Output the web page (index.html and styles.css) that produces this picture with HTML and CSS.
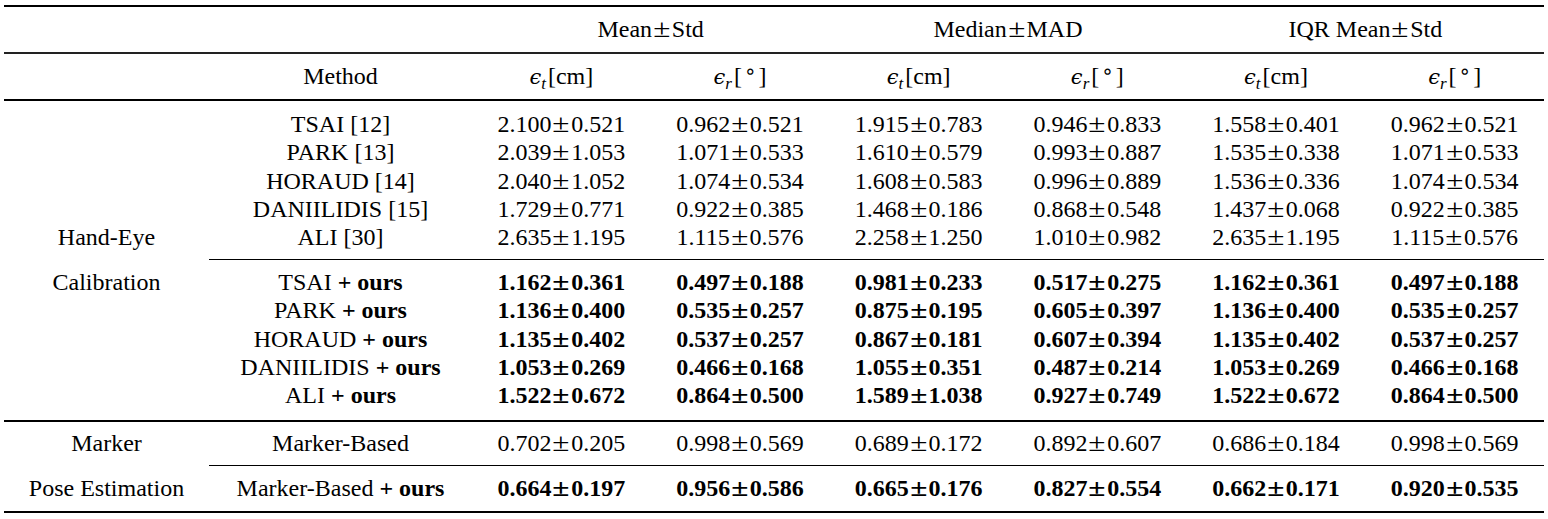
FILE: index.html
```html
<!DOCTYPE html>
<html>
<head>
<meta charset="utf-8">
<link rel="stylesheet" href="styles.css">
</head>
<body>
<div class="tbl">
  <div class="row groups">
    <div></div><div></div>
    <div class="span2">Mean<span class="pm">±</span>Std</div>
    <div class="span2">Median<span class="pm">±</span>MAD</div>
    <div class="span2">IQR Mean<span class="pm">±</span>Std</div>
  </div>
  <div class="row cols">
    <div></div>
    <div>Method</div>
    <div><span class="eps">ϵ</span><sub class="sb">t</sub>[cm]</div>
    <div><span class="eps">ϵ</span><sub class="sb">r</sub>[<span class="deg">∘</span>]</div>
    <div><span class="eps">ϵ</span><sub class="sb">t</sub>[cm]</div>
    <div><span class="eps">ϵ</span><sub class="sb">r</sub>[<span class="deg">∘</span>]</div>
    <div><span class="eps">ϵ</span><sub class="sb">t</sub>[cm]</div>
    <div><span class="eps">ϵ</span><sub class="sb">r</sub>[<span class="deg">∘</span>]</div>
  </div>
  <div class="block first">
    <div class="row">
      <div></div><div>TSAI [12]</div>
      <div>2.100<span class="pm">±</span>0.521</div><div>0.962<span class="pm">±</span>0.521</div><div>1.915<span class="pm">±</span>0.783</div><div>0.946<span class="pm">±</span>0.833</div><div>1.558<span class="pm">±</span>0.401</div><div>0.962<span class="pm">±</span>0.521</div>
    </div>
    <div class="row">
      <div></div><div>PARK [13]</div>
      <div>2.039<span class="pm">±</span>1.053</div><div>1.071<span class="pm">±</span>0.533</div><div>1.610<span class="pm">±</span>0.579</div><div>0.993<span class="pm">±</span>0.887</div><div>1.535<span class="pm">±</span>0.338</div><div>1.071<span class="pm">±</span>0.533</div>
    </div>
    <div class="row">
      <div></div><div>HORAUD [14]</div>
      <div>2.040<span class="pm">±</span>1.052</div><div>1.074<span class="pm">±</span>0.534</div><div>1.608<span class="pm">±</span>0.583</div><div>0.996<span class="pm">±</span>0.889</div><div>1.536<span class="pm">±</span>0.336</div><div>1.074<span class="pm">±</span>0.534</div>
    </div>
    <div class="row">
      <div></div><div>DANIILIDIS [15]</div>
      <div>1.729<span class="pm">±</span>0.771</div><div>0.922<span class="pm">±</span>0.385</div><div>1.468<span class="pm">±</span>0.186</div><div>0.868<span class="pm">±</span>0.548</div><div>1.437<span class="pm">±</span>0.068</div><div>0.922<span class="pm">±</span>0.385</div>
    </div>
    <div class="row">
      <div>Hand-Eye</div><div>ALI [30]</div>
      <div>2.635<span class="pm">±</span>1.195</div><div>1.115<span class="pm">±</span>0.576</div><div>2.258<span class="pm">±</span>1.250</div><div>1.010<span class="pm">±</span>0.982</div><div>2.635<span class="pm">±</span>1.195</div><div>1.115<span class="pm">±</span>0.576</div>
    </div>
  </div>
  <div class="cmid"></div>
  <div class="block second">
    <div class="row bold">
      <div class="cat">Calibration</div><div class="m">TSAI <b>+ ours</b></div>
      <div>1.162<span class="pm">±</span>0.361</div><div>0.497<span class="pm">±</span>0.188</div><div>0.981<span class="pm">±</span>0.233</div><div>0.517<span class="pm">±</span>0.275</div><div>1.162<span class="pm">±</span>0.361</div><div>0.497<span class="pm">±</span>0.188</div>
    </div>
    <div class="row bold">
      <div></div><div class="m">PARK <b>+ ours</b></div>
      <div>1.136<span class="pm">±</span>0.400</div><div>0.535<span class="pm">±</span>0.257</div><div>0.875<span class="pm">±</span>0.195</div><div>0.605<span class="pm">±</span>0.397</div><div>1.136<span class="pm">±</span>0.400</div><div>0.535<span class="pm">±</span>0.257</div>
    </div>
    <div class="row bold">
      <div></div><div class="m">HORAUD <b>+ ours</b></div>
      <div>1.135<span class="pm">±</span>0.402</div><div>0.537<span class="pm">±</span>0.257</div><div>0.867<span class="pm">±</span>0.181</div><div>0.607<span class="pm">±</span>0.394</div><div>1.135<span class="pm">±</span>0.402</div><div>0.537<span class="pm">±</span>0.257</div>
    </div>
    <div class="row bold">
      <div></div><div class="m">DANIILIDIS <b>+ ours</b></div>
      <div>1.053<span class="pm">±</span>0.269</div><div>0.466<span class="pm">±</span>0.168</div><div>1.055<span class="pm">±</span>0.351</div><div>0.487<span class="pm">±</span>0.214</div><div>1.053<span class="pm">±</span>0.269</div><div>0.466<span class="pm">±</span>0.168</div>
    </div>
    <div class="row bold">
      <div></div><div class="m">ALI <b>+ ours</b></div>
      <div>1.522<span class="pm">±</span>0.672</div><div>0.864<span class="pm">±</span>0.500</div><div>1.589<span class="pm">±</span>1.038</div><div>0.927<span class="pm">±</span>0.749</div><div>1.522<span class="pm">±</span>0.672</div><div>0.864<span class="pm">±</span>0.500</div>
    </div>
  </div>
  <div class="row marker">
    <div>Marker</div><div>Marker-Based</div>
    <div>0.702<span class="pm">±</span>0.205</div><div>0.998<span class="pm">±</span>0.569</div><div>0.689<span class="pm">±</span>0.172</div><div>0.892<span class="pm">±</span>0.607</div><div>0.686<span class="pm">±</span>0.184</div><div>0.998<span class="pm">±</span>0.569</div>
  </div>
  <div class="cmid"></div>
  <div class="row marker2 bold">
    <div class="cat">Pose Estimation</div><div class="m">Marker-Based <b>+ ours</b></div>
    <div>0.664<span class="pm">±</span>0.197</div><div>0.956<span class="pm">±</span>0.586</div><div>0.665<span class="pm">±</span>0.176</div><div>0.827<span class="pm">±</span>0.554</div><div>0.662<span class="pm">±</span>0.171</div><div>0.920<span class="pm">±</span>0.535</div>
  </div>
</div>
</body>
</html>
```

FILE: styles.css
```css
html, body {
  margin: 0;
  background: #fff;
}
body {
  padding: 5px 4px 0 4px;
  font-family: "Liberation Serif", "Times New Roman", serif;
  font-size: 24px;
  color: #000;
}
.tbl {
  width: 1540px;
  border-top: 2px solid #000;
  border-bottom: 2px solid #000;
}
.row {
  display: grid;
  grid-template-columns: 205px 263px repeat(6, 1fr);
  align-items: center;
  height: 28.3px;
  line-height: 28.3px;
  white-space: nowrap;
}
.row > div {
  text-align: center;
}
.span2 {
  grid-column: span 2;
}
.groups {
  height: 45px;
  border-bottom: 2px solid #222;
}
.cols {
  height: 45px;
  border-bottom: 2px solid #000;
}
.block.first {
  padding: 9px 0 7.5px 0;
}
.block.second {
  padding: 8px 0 10.5px 0;
  border-bottom: 2px solid #000;
}
.cmid {
  margin-left: 205px;
  border-top: 1px solid #000;
}
.row.marker {
  height: 43px;
}
.row.marker2 {
  height: 45px;
}
.bold > div {
  font-weight: bold;
}
.bold > div.cat,
.bold > div.m {
  font-weight: normal;
}
.m b {
  font-weight: bold;
}
.pm {
  display: inline-block;
  font-size: 25px;
  line-height: 0;
  transform: scaleX(1.25);
  margin: 0 3px;
}
.eps {
  font-family: "DejaVu Serif", serif;
  font-style: italic;
  font-size: 21px;
}
.sb {
  font-style: italic;
  font-size: 17px;
  vertical-align: -5px;
  line-height: 0;
  margin-right: 2px;
}
.deg {
  display: inline-block;
  font-family: "DejaVu Sans", sans-serif;
  font-size: 20px;
  vertical-align: 6px;
  line-height: 0;
  margin: 0 2px;
}
```
